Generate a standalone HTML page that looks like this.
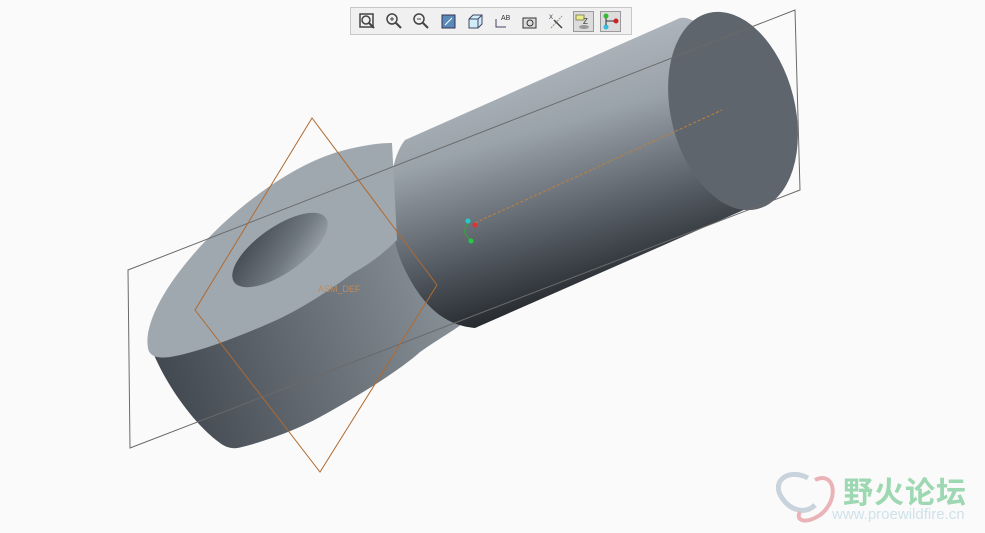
<!DOCTYPE html>
<html><head><meta charset="utf-8"><style>
html,body{margin:0;padding:0;width:985px;height:533px;overflow:hidden;background:#fafafa;font-family:"Liberation Sans",sans-serif}
#tb{position:absolute;left:350px;top:7px;width:282px;height:28px;background:#f0f0f0;border:1px solid #c8c8c8;box-sizing:border-box;display:flex;align-items:center;padding-left:6px}
.b{width:21px;height:21px;margin-right:6px;box-sizing:border-box;position:relative}
.b.on{background:#dcdcdc;border:1px solid #9a9a9a}
#wm1{position:absolute;left:843px;top:468px;font:bold 30px "Noto Sans CJK SC",sans-serif;color:#9ed8b2;letter-spacing:1px}
#wm2{position:absolute;left:832px;top:506px;font-size:15px;color:#cfe2ea}
</style></head><body>
<svg width="985" height="533" style="position:absolute;left:0;top:0">
<defs>
<linearGradient id="cyl" x1="0" y1="0" x2="0.35" y2="1" gradientUnits="objectBoundingBox">
<stop offset="0" stop-color="#c4cad0"/><stop offset="0.45" stop-color="#9aa2aa"/><stop offset="0.8" stop-color="#4a5057"/><stop offset="1" stop-color="#1f2226"/></linearGradient>
<linearGradient id="side" x1="150" y1="400" x2="460" y2="300" gradientUnits="userSpaceOnUse">
<stop offset="0" stop-color="#3e444b"/><stop offset="0.4" stop-color="#5d646c"/><stop offset="1" stop-color="#8a9299"/></linearGradient>
<linearGradient id="hole" x1="0" y1="0" x2="1" y2="1">
<stop offset="0" stop-color="#3c4249"/><stop offset="0.6" stop-color="#6f777f"/><stop offset="1" stop-color="#aab1b8"/></linearGradient>
</defs>
<path d="M150,345 C165,385 195,425 220,443 C228,449 235,449 242,447 C270,440 300,428 320,417 C360,395 400,370 420,352 C440,338 455,330 463,323 C462,310 458,300 453,297 L397,240 Z" fill="url(#side)"/>
<path d="M405,140 L680,18 C720,10 760,160 755,205 L475,328 C440,325 420,300 405,270 C385,230 385,165 405,140 Z" fill="url(#cyl)"/>
<path d="M148,348 C138,295 255,172 345,150 C365,145 380,143 392,143 L397,240 C385,252 370,264 353,273 C330,290 300,310 270,323 C240,336 200,352 170,357 C155,359 149,355 148,348 Z" fill="#a0a8af"/>
<ellipse cx="280" cy="250" rx="56" ry="23" transform="rotate(-35 280 250)" fill="url(#hole)"/>
<ellipse cx="733" cy="111" rx="62" ry="101" transform="rotate(-14 733 111)" fill="#5e656d"/>
<polygon points="128,270 795,10 800,190 130,448" fill="none" stroke="#6a6a6a" stroke-width="1"/>
<polygon points="312,118 437,285 320,472 195,310" fill="none" stroke="#b06a30" stroke-width="1"/>
<line x1="475" y1="223" x2="722" y2="110" stroke="#c0803c" stroke-width="1" stroke-dasharray="3,2"/>
<text x="318" y="292" font-size="9" fill="#c08a5a" font-family="Liberation Sans">ASM_DEF</text>
<line x1="468" y1="222" x2="464" y2="232" stroke="#3a3" /><line x1="464" y1="232" x2="471" y2="241" stroke="#3a3"/>
<circle cx="468" cy="221" r="2.5" fill="#2cc"/><circle cx="475" cy="225" r="2.5" fill="#d33"/><circle cx="471" cy="241" r="2.5" fill="#2c4"/>
<path d="M808,478 C790,468 770,480 782,498 C790,510 805,515 815,505" fill="none" stroke="#c9d3dc" stroke-width="5"/>
<path d="M815,480 C835,470 840,500 820,515 C805,525 795,520 800,512" fill="none" stroke="#eab3b8" stroke-width="4"/>
</svg>
<div id="tb">
<div class="b"><svg width="21" height="21"><rect x="3" y="3" width="13" height="13" fill="none" stroke="#444" stroke-width="1.5"/><circle cx="9" cy="9" r="4" fill="none" stroke="#444" stroke-width="1.5"/><line x1="12" y1="12" x2="17" y2="17" stroke="#444" stroke-width="2"/></svg></div>
<div class="b"><svg width="21" height="21"><circle cx="8" cy="8" r="5" fill="none" stroke="#444" stroke-width="1.5"/><line x1="6" y1="8" x2="10" y2="8" stroke="#444"/><line x1="8" y1="6" x2="8" y2="10" stroke="#444"/><line x1="12" y1="12" x2="17" y2="17" stroke="#444" stroke-width="2"/></svg></div>
<div class="b"><svg width="21" height="21"><circle cx="8" cy="8" r="5" fill="none" stroke="#444" stroke-width="1.5"/><line x1="6" y1="8" x2="10" y2="8" stroke="#444"/><line x1="12" y1="12" x2="17" y2="17" stroke="#444" stroke-width="2"/></svg></div>
<div class="b"><svg width="21" height="21"><rect x="4" y="4" width="13" height="13" fill="#5a8ab8" stroke="#335"/><line x1="7" y1="14" x2="14" y2="7" stroke="#fff"/></svg></div>
<div class="b"><svg width="21" height="21"><path d="M4,8 L8,4 L17,4 L17,13 L13,17 L4,17 Z" fill="#cfeef7" stroke="#446"/><path d="M4,8 L13,8 L13,17 M13,8 L17,4" fill="none" stroke="#446"/></svg></div>
<div class="b"><svg width="21" height="21"><path d="M4,8 L4,16 L14,16" fill="none" stroke="#446"/><text x="9" y="9" font-size="7" fill="#333">AB</text></svg></div>
<div class="b"><svg width="21" height="21"><rect x="4" y="7" width="13" height="10" fill="#ddd" stroke="#333"/><circle cx="11" cy="12" r="3" fill="none" stroke="#333"/></svg></div>
<div class="b"><svg width="21" height="21"><line x1="5" y1="17" x2="16" y2="5" stroke="#a86" stroke-dasharray="2,1"/><line x1="8" y1="9" x2="16" y2="17" stroke="#444" stroke-width="1.5"/><text x="3" y="8" font-size="6" fill="#333">X</text></svg></div>
<div class="b on"><svg width="19" height="19"><rect x="2" y="3" width="8" height="5" fill="#ee8" stroke="#886"/><text x="9" y="12" font-size="8" fill="#333">Z</text><ellipse cx="10" cy="15" rx="5" ry="2" fill="#999"/></svg></div>
<div class="b on"><svg width="19" height="19"><circle cx="5" cy="4" r="2.5" fill="#3b3"/><circle cx="5" cy="15" r="2.5" fill="#3bd"/><circle cx="15" cy="9" r="2.5" fill="#c22"/><path d="M5,6 L5,13 M5,9 L13,9" stroke="#333" fill="none"/></svg></div>
</div>
<div id="wm1">野火论坛</div>
<div id="wm2">www.proewildfire.cn</div>
</body></html>
